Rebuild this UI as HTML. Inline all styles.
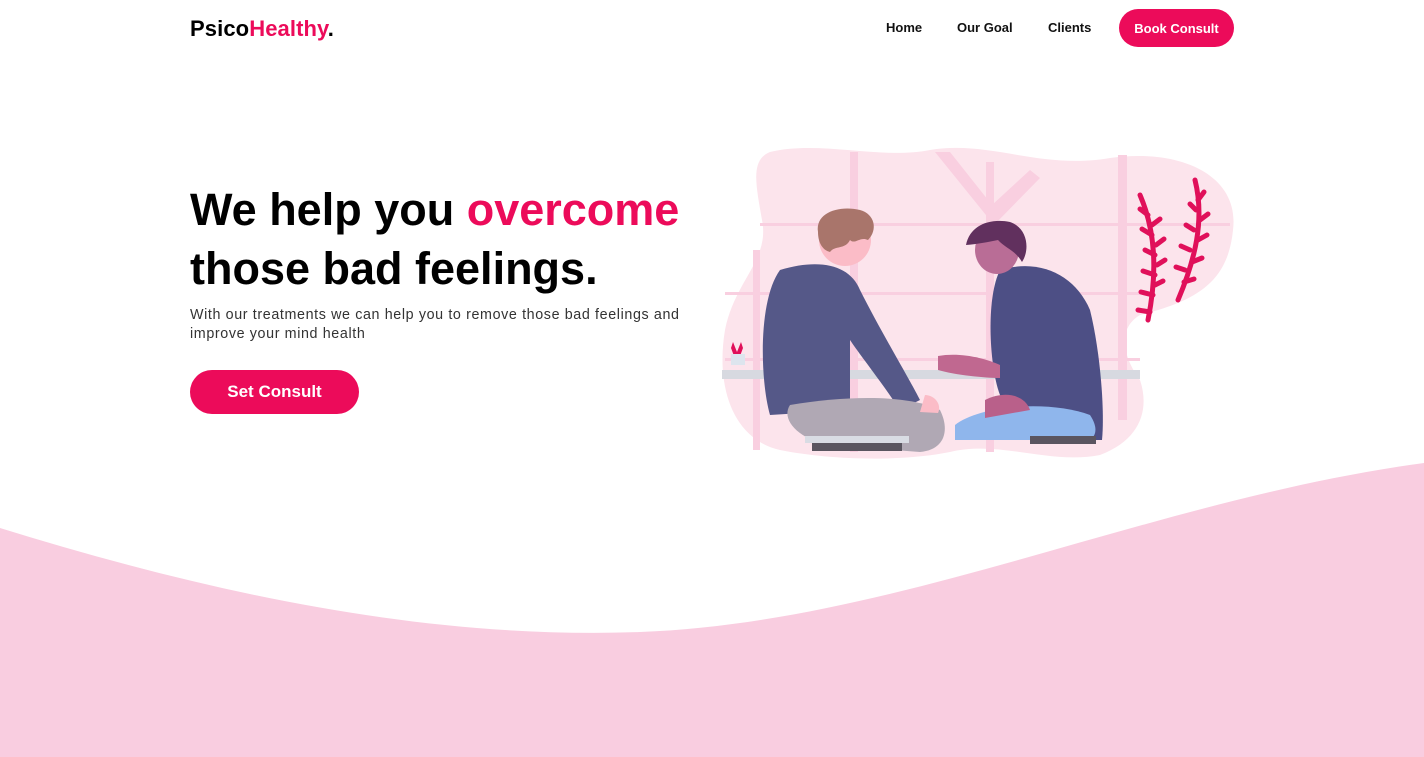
<!DOCTYPE html>
<html><head><meta charset="utf-8"><style>
*{margin:0;padding:0;box-sizing:border-box}
body{width:1424px;height:757px;overflow:hidden;background:#fff;font-family:"Liberation Sans",sans-serif;position:relative}
.logo{position:absolute;left:190px;top:16px;font-size:22px;font-weight:bold;color:#000;letter-spacing:0.1px}
.logo span{color:#ec0b5a}
.nav a{position:absolute;top:20px;font-size:13px;font-weight:bold;color:#111;text-decoration:none}
.btn{position:absolute;background:#ec0b5a;color:#fff;font-weight:bold;display:flex;align-items:center;justify-content:center}
h1{position:absolute;left:190px;top:180px;font-size:45px;line-height:59px;font-weight:bold;color:#000;letter-spacing:0}
h1 span{color:#ec0b5a}
p{position:absolute;left:190px;top:306px;font-size:14.3px;line-height:19px;color:#333;width:510px;letter-spacing:0.62px}
svg{position:absolute;left:0;top:0}
</style></head><body>
<svg width="1424" height="757">
<path d="M0 528 C200 590 420 640 640 632 C900 622 1150 500 1424 463 L1424 757 L0 757 Z" fill="#f9cde0"/>
<path d="M770 152 C820 140 880 160 930 150 C990 140 1040 170 1110 158 C1180 148 1240 175 1233 230 C1228 280 1200 300 1140 315 C1115 330 1125 360 1140 380 C1150 410 1140 440 1100 455 C1050 465 1000 440 950 452 C900 462 830 460 780 450 C735 440 715 390 725 330 C735 280 770 260 762 220 C756 185 750 160 770 152 Z" fill="#fce4ec"/>
<g fill="#f9cfe0">
<rect x="850" y="152" width="8" height="300"/><rect x="986" y="162" width="8" height="290"/><rect x="1118" y="155" width="9" height="265"/><rect x="753" y="250" width="7" height="200"/>
<rect x="760" y="223" width="470" height="3"/><rect x="725" y="292" width="415" height="3"/><rect x="725" y="358" width="415" height="3"/>
<path d="M935 152 L950 152 L992 205 L1030 170 L1040 178 L994 225 Z"/>
</g>
<rect x="722" y="370" width="418" height="9" fill="#d7d9e0"/>
<path d="M733 342 l4 10 l4-10 l2 6 l-3 8 h-6 l-3-8 z" fill="#e0105a"/><rect x="731" y="354" width="14" height="11" fill="#dde5ee"/>
<path d="M780 270 C820 258 850 265 860 290 C880 330 910 380 920 400 L900 410 C880 380 860 355 850 340 L850 410 L770 415 C760 380 758 300 780 270 Z" fill="#555888"/>
<path d="M790 405 C850 395 910 395 940 410 C950 430 945 450 920 452 L830 445 C800 440 780 420 790 405 Z" fill="#b0a8b4"/>
<rect x="805" y="436" width="104" height="7" fill="#d9dce4"/><rect x="812" y="443" width="90" height="8" fill="#5a5560"/>
<circle cx="845" cy="240" r="26" fill="#fbbcc7"/><path d="M818 232 C815 212 840 205 860 210 C875 214 878 230 868 240 C860 236 855 245 850 240 C845 250 835 245 830 252 C822 250 818 242 818 232 Z" fill="#a9756b"/>
<path d="M925 395 C935 395 942 405 938 413 L920 412 Z" fill="#fbbcc7"/>
<path d="M1000 270 C1040 258 1075 275 1090 310 C1100 350 1105 410 1102 440 L1030 440 L1000 395 C990 370 985 300 1000 270 Z" fill="#4d4f85"/>
<path d="M955 425 C980 405 1050 400 1090 415 C1100 430 1095 440 1085 440 L955 440 Z" fill="#8fb6ec"/>
<path d="M938 356 C960 352 985 358 1000 365 L1000 378 C985 378 955 375 938 370 Z" fill="#c06890"/>
<path d="M985 400 C1005 390 1025 395 1030 410 L985 418 Z" fill="#b9608a"/>
<ellipse cx="997" cy="250" rx="22" ry="24" fill="#b96d96"/><path d="M966 245 C970 225 990 218 1010 222 C1028 228 1030 250 1022 262 C1015 250 1005 248 998 240 C988 242 978 244 966 245 Z" fill="#61305e"/>
<rect x="1030" y="436" width="66" height="8" fill="#5a5560"/>
<g stroke="#e0105a" stroke-width="5" fill="none" stroke-linecap="round">
<path d="M1140 195 C1155 230 1158 270 1148 320"/><path d="M1195 180 C1205 220 1195 260 1178 300"/>
<path d="M1148 215 l-8 -6 M1152 235 l-10-6 M1155 255 l-10-5 M1155 275 l-12-4 M1153 295 l-12-3 M1150 312 l-12-2 M1152 225 l8-6 M1156 245 l8-6 M1157 265 l8-5 M1155 285 l8-4"/>
<path d="M1198 200 l6-8 M1200 220 l8-6 M1198 240 l9-5 M1192 262 l10-4 M1184 282 l10-3 M1196 210 l-6-6 M1194 230 l-8-5 M1190 250 l-9-4 M1185 270 l-9-3"/>
</g>
</svg>
<div class="logo">Psico<span>Healthy</span>.</div>
<div class="nav"><a style="left:886px">Home</a><a style="left:957px">Our Goal</a><a style="left:1048px">Clients</a></div>
<div class="btn" style="left:1119px;top:9px;width:115px;height:38px;border-radius:19px;font-size:13px">Book Consult</div>
<h1>We help you <span>overcome</span><br>those bad feelings.</h1>
<p>With our treatments we can help you to remove those bad feelings and improve your mind health</p>
<div class="btn" style="left:190px;top:370px;width:169px;height:44px;border-radius:22px;font-size:17px">Set Consult</div>
</body></html>
